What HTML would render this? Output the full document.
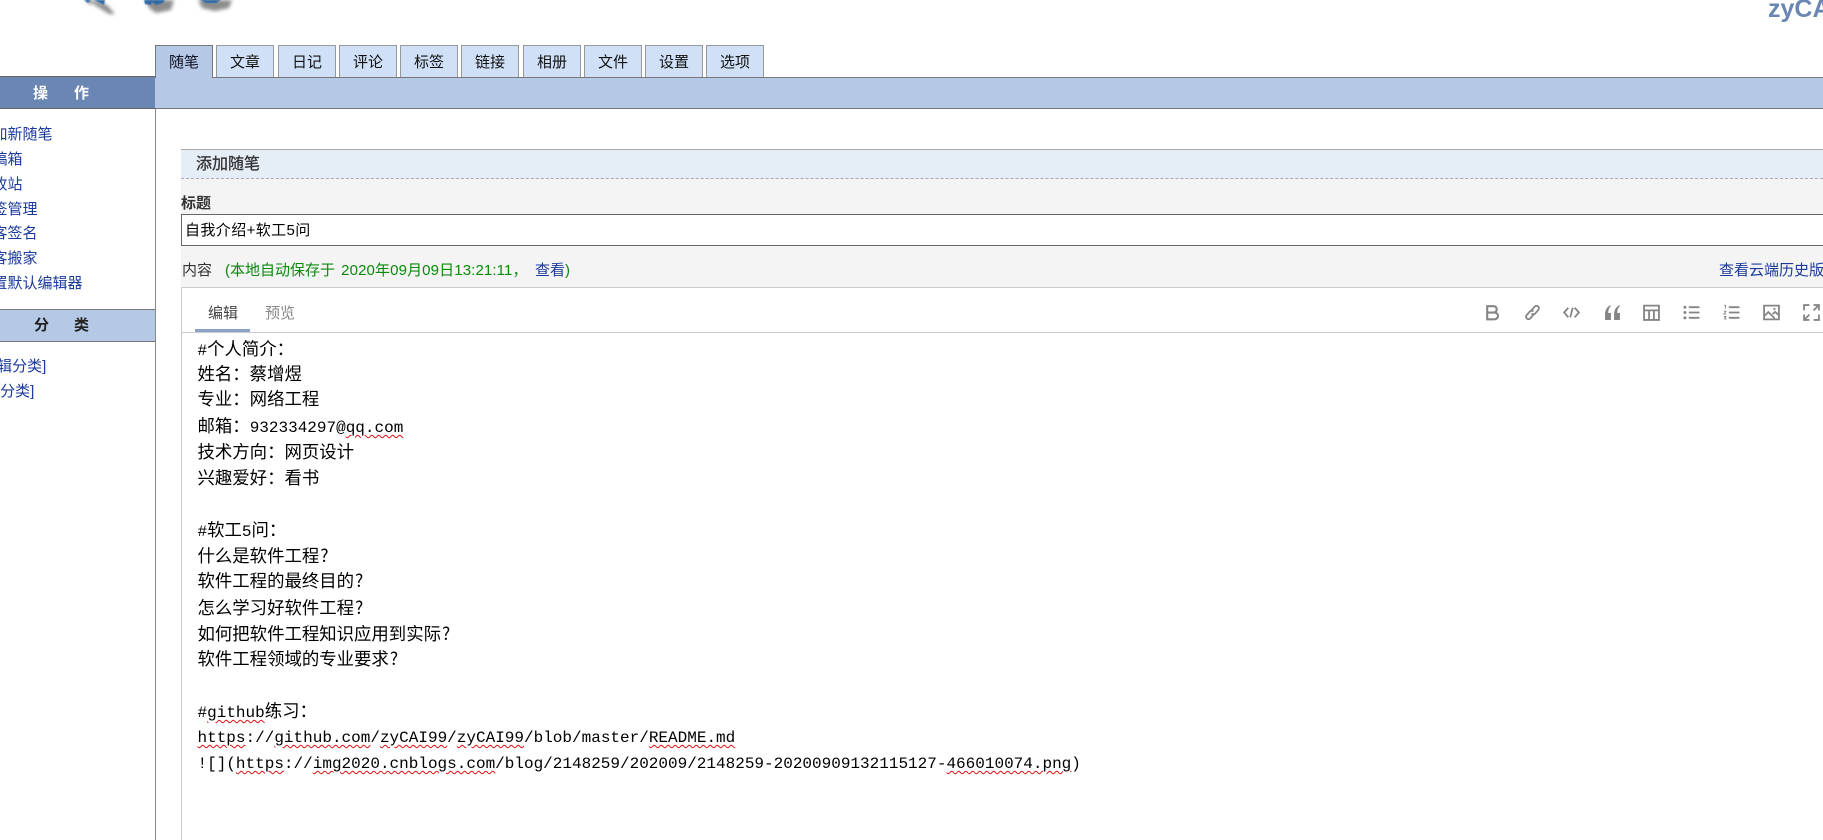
<!DOCTYPE html>
<html lang="zh"><head><meta charset="utf-8"><title>添加随笔</title>
<style>
html,body{margin:0;padding:0;background:#fff;width:1823px;height:840px;overflow:hidden}
body{position:relative;font-family:"Liberation Sans","Noto Sans CJK SC",sans-serif;font-size:15px;color:#222}
.a{position:absolute;white-space:pre}
.t{position:absolute;white-space:pre;line-height:20px;height:20px}
.tab{position:absolute;top:45px;width:56px;height:31px;background:#cfe0f7;border:1px solid #999;border-bottom:0;text-align:center;line-height:33px;font-size:15px;color:#111}
.tab.on{width:56px;height:32px;background:#b5c9e6;border:1px solid #777;border-bottom:0;border-width:1px 1px 0 1px;z-index:3;color:#112}
.s{color:#1b3a9b}
.l{position:absolute;left:197.5px;white-space:pre;font-family:"Liberation Mono","Noto Sans CJK SC",monospace;font-size:16px;line-height:26px;height:26px;color:#000}
.l i{font-style:normal;font-family:"Noto Sans CJK SC",sans-serif;font-size:17.4px}
.l u{text-decoration:underline wavy #e01010 1px;text-underline-offset:2px}
.l b{font-weight:normal;font-family:"Noto Sans CJK SC",sans-serif;font-size:17.4px;margin-left:1px}
svg.ic{position:absolute;top:304px;width:17px;height:17px;fill:none;stroke:#858585;stroke-width:1.7}
</style></head><body>

<!-- logo fragments -->
<svg class="a" style="left:70px;top:0" width="170" height="25" viewBox="0 0 170 25">
<defs><filter id="b" x="-50%" y="-50%" width="200%" height="200%"><feGaussianBlur stdDeviation="1.8"/></filter><filter id="c"><feGaussianBlur stdDeviation=".5"/></filter></defs>
<g filter="url(#b)" fill="#666" opacity=".75">
<path d="M16 0l9 8 M24 0l13 5 8 9-6 0-11-7-5-3z"/><path d="M76 0h28l-3 10-15 3-7-5z"/><path d="M128 0l4 8 13 3 14-3 3-8z"/><path d="M15 0l6 5 3-5z"/>
</g>
<g filter="url(#c)" fill="#2f6aa8">
<path d="M14 0l4 3 3-3z"/><path d="M24 0l10 5 1-5z"/><path d="M74 0l1 4 6 1 1-3 4 3 7-2 2-3z"/><path d="M130 0l6 3 10 0 5-3z"/>
</g></svg>

<div class="a" style="left:1768px;top:-6px;font:bold 25px/30px 'Liberation Sans',sans-serif;color:#6a86b2">zyCAI99</div>

<!-- tabs -->
<div class="tab on" style="left:155px">随笔</div>
<div class="tab" style="left:216px">文章</div>
<div class="tab" style="left:278px">日记</div>
<div class="tab" style="left:339px">评论</div>
<div class="tab" style="left:400px">标签</div>
<div class="tab" style="left:461px">链接</div>
<div class="tab" style="left:523px">相册</div>
<div class="tab" style="left:584px">文件</div>
<div class="tab" style="left:645px">设置</div>
<div class="tab" style="left:706px">选项</div>

<!-- header bars -->
<div class="a" style="left:155px;top:77px;width:1668px;height:30px;background:#b5c9e6;border-top:1px solid #777;border-bottom:1px solid #777;z-index:2"></div>
<div class="a" style="left:0;top:76px;width:155px;height:31px;background:#6a86b2;border-top:1px solid #666;border-bottom:1px solid #666"></div>
<div class="t" style="left:33px;top:84px;color:#fff;font-weight:bold;font-size:15px">操</div>
<div class="t" style="left:74px;top:84px;color:#fff;font-weight:bold;font-size:15px">作</div>
<div class="a" style="left:155px;top:108px;width:1px;height:732px;background:#888"></div>

<!-- sidebar -->
<div class="t s" style="left:-22.5px;top:125px">添加新随笔</div>
<div class="t s" style="left:-22.5px;top:150px">草稿箱</div>
<div class="t s" style="left:-22.5px;top:175px">回收站</div>
<div class="t s" style="left:-22.5px;top:200px">标签管理</div>
<div class="t s" style="left:-22.5px;top:224px">博客签名</div>
<div class="t s" style="left:-22.5px;top:249px">博客搬家</div>
<div class="t s" style="left:-22.5px;top:274px">设置默认编辑器</div>
<div class="a" style="left:0;top:309px;width:155px;height:31px;background:#b5c9e6;border-top:1px solid #777;border-bottom:1px solid #777"></div>
<div class="t" style="left:34px;top:316px;font-weight:bold;color:#222">分</div>
<div class="t" style="left:74px;top:316px;font-weight:bold;color:#222">类</div>
<div class="t s" style="left:-22px;top:357px">[编辑分类]</div>
<div class="t s" style="left:-19px;top:382px">[未分类]</div>

<!-- form -->
<div class="a" style="left:181px;top:149px;width:1642px;height:28px;background:#e5edf7;border-top:1px solid #aaa;border-bottom:1px dashed #aab"></div>
<div class="t" style="left:196px;top:155px;font-size:16px;color:#333;-webkit-text-stroke:.3px #333">添加随笔</div>
<div class="a" style="left:181px;top:179px;width:1642px;height:108px;background:#f4f4f4"></div>
<div class="t" style="left:181px;top:194px;font-weight:bold;color:#333">标题</div>
<div class="a" style="left:181px;top:214px;width:1642px;height:30px;background:#fff;border:1px solid #666;border-right:0"></div>
<div class="t" style="left:185px;top:221px;color:#000;letter-spacing:.4px">自我介绍+软工5问</div>
<div class="t" style="left:182px;top:261px;color:#333">内容</div>
<div class="t" style="left:225px;top:261px;color:#0a8a0a">(本地自动保存于 <span style="margin-left:2px;letter-spacing:.12px">2020年09月09日13:21:11&#xFF0C;</span></div>
<div class="t s" style="left:535px;top:261px">查看</div>
<div class="t" style="left:565px;top:261px;color:#0a8a0a">)</div>
<div class="t s" style="left:1719px;top:261px">查看云端历史版本</div>

<!-- editor -->
<div class="a" style="left:181px;top:287px;width:1642px;height:553px;background:#fff;border-top:1px solid #ccc;border-left:1px solid #ccc"></div>
<div class="t" style="left:208px;top:304px;color:#444">编辑</div>
<div class="t" style="left:265px;top:304px;color:#888">预览</div>
<div class="a" style="left:182px;top:332px;width:1641px;height:1px;background:#ccc"></div>
<div class="a" style="left:195px;top:329px;width:55px;height:3px;background:#8ba3c7"></div>

<!-- toolbar icons -->
<svg class="ic" style="left:1484px;stroke-width:2" viewBox="0 0 16 16"><path d="M3 2h6a3 3 0 0 1 0 6H3zM3 8h7a3.200 3.200 0 0 1 0 6.400H3z"/></svg>
<svg class="ic" style="left:1524px" viewBox="0 0 16 16"><path d="M7 6l3-3.500a2.300 2.300 0 0 1 3.500 3L10.500 9a2.300 2.300 0 0 1-3.300 0M9 10l-3 3.500a2.300 2.300 0 0 1-3.500-3L5.500 7a2.300 2.300 0 0 1 3.300 0"/></svg>
<svg class="ic" style="left:1563px" viewBox="0 0 16 16"><path d="M5 3.500L1 8l4 4.500M11 3.500L15 8l-4 4.500M9.200 3.500L6.800 12.500"/></svg>
<svg class="ic" style="left:1604px;fill:#858585;stroke:none" viewBox="0 0 16 16"><path d="M1 15V9.500C1 6 2.500 3 6 1l.5 1C4.800 3.500 4 5.500 4 8.500h2.500V15zM9.500 15V9.500C9.500 6 11 3 14.500 1l.5 1C13.300 3.500 12.500 5.500 12.500 8.500H15V15z"/></svg>
<svg class="ic" style="left:1643px" viewBox="0 0 16 16"><path d="M1 1.500h14v13.500H1zM1 6h14M5.700 6v9M10.300 6v9"/></svg>
<svg class="ic" style="left:1683px" viewBox="0 0 16 16"><path d="M5.500 3h10M5.500 8h10M5.500 13h10"/><circle cx="1.800" cy="3" r="1.400" fill="#858585" stroke="none"/><circle cx="1.800" cy="8" r="1.400" fill="#858585" stroke="none"/><circle cx="1.800" cy="13" r="1.400" fill="#858585" stroke="none"/></svg>
<svg class="ic" style="left:1723px" viewBox="0 0 16 16"><path d="M5.500 3h10M5.500 8h10M5.500 13h10"/><path d="M1 1.500l1.300-.5v3.500M.8 6.800h2L.8 9.500h2.200M.8 11.700h2l-1 1.200 1 1.200h-2" style="stroke-width:.8"/></svg>
<svg class="ic" style="left:1763px" viewBox="0 0 16 16"><path d="M1 1.500h14v13H1zM1 11.500l4-4 6 6M9 9.500l2.500-2 3.500 3"/><circle cx="10.700" cy="4.700" r="1.100" fill="#858585" stroke="none"/></svg>
<svg class="ic" style="left:1803px" viewBox="0 0 16 16"><path d="M1 6V1h5M10 1h5v5M15 10v5h-5M6 15H1v-5M15 1L10 6M1 15l5-5"/></svg>

<!-- editor text -->
<div class="l" style="top:336px">#<i>个人简介&#xFF1A;</i></div>
<div class="l" style="top:361px"><i>姓名&#xFF1A;蔡增煜</i></div>
<div class="l" style="top:386px"><i>专业&#xFF1A;网络工程</i></div>
<div class="l" style="top:413px"><i>邮箱&#xFF1A;</i>932334297@<u>qq.com</u></div>
<div class="l" style="top:439px"><i>技术方向&#xFF1A;网页设计</i></div>
<div class="l" style="top:465px"><i>兴趣爱好&#xFF1A;看书</i></div>
<div class="l" style="top:517px">#<i>软工</i>5<i>问&#xFF1A;</i></div>
<div class="l" style="top:543px"><i>什么是软件工程</i><b>?</b></div>
<div class="l" style="top:568px"><i>软件工程的最终目的</i><b>?</b></div>
<div class="l" style="top:595px"><i>怎么学习好软件工程</i><b>?</b></div>
<div class="l" style="top:621px"><i>如何把软件工程知识应用到实际</i><b>?</b></div>
<div class="l" style="top:646px"><i>软件工程领域的专业要求</i><b>?</b></div>
<div class="l" style="top:698px">#<u>github</u><i>练习&#xFF1A;</i></div>
<div class="l" style="top:725px"><u>https</u>://<u>github.com</u>/<u>zyCAI99</u>/<u>zyCAI99</u>/blob/master/<u>README.md</u></div>
<div class="l" style="top:751px">![](<u>https</u>://<u>img2020.cnblogs.com</u>/blog/2148259/202009/2148259-20200909132115127-<u>466010074.png</u>)</div>

</body></html>
